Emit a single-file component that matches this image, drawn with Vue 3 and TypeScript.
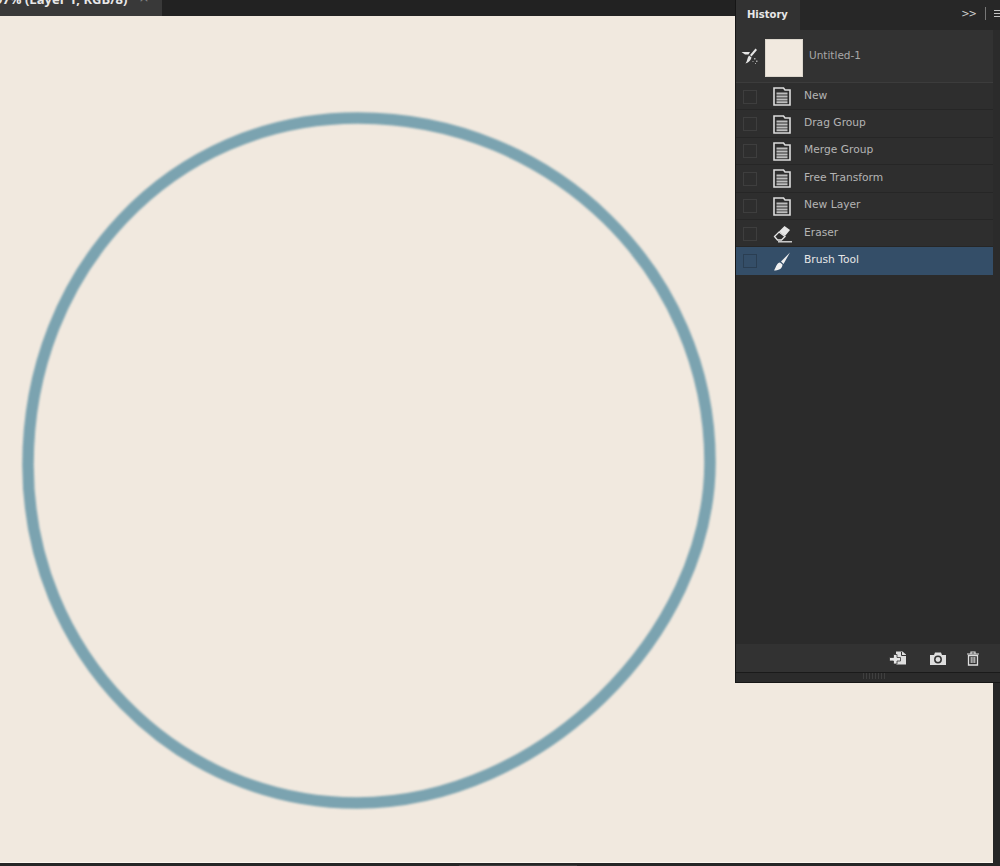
<script setup lang="ts">
type Step = { label: string; icon: 'doc' | 'eraser' | 'brush'; active?: boolean }
const steps: Step[] = [
  { label: 'New', icon: 'doc' },
  { label: 'Drag Group', icon: 'doc' },
  { label: 'Merge Group', icon: 'doc' },
  { label: 'Free Transform', icon: 'doc' },
  { label: 'New Layer', icon: 'doc' },
  { label: 'Eraser', icon: 'eraser' },
  { label: 'Brush Tool', icon: 'brush', active: true },
]
</script>

<template>
  <div class="app">
    <header class="topbar">
      <div class="doc-tab">
        <span class="doc-title">97% (Layer 1, RGB/8)</span>
        <span class="doc-close">×</span>
      </div>
    </header>
    <main class="canvas">
      <svg class="ring" width="993" height="846" viewBox="0 16 993 846">
        <path
          d="M358 118 C552 118 710 272 710 462 C710 635 540 803 357 803 C175 803 28 652 28 465 C28 270 172 118 358 118 Z"
          fill="none"
          stroke="#7ba3b0"
          stroke-width="11.500"
        />
      </svg>
    </main>
    <div class="statusbar"><span class="status-thumb"></span></div>

    <aside class="panel">
      <div class="panel-head">
        <div class="panel-tab">History</div>
        <div class="panel-tools">
          <span class="chev">&gt;&gt;</span>
          <span class="sep"></span>
          <span class="burger"><i></i><i></i><i></i></span>
        </div>
      </div>
      <div class="snapshot">
        <svg class="snap-icon" width="18" height="18" viewBox="0 0 18 18">
          <path d="M0.500 5 H9 L7.500 7.500 H4 Z" fill="#e6e6e6" />
          <path d="M14.500 1.500 L16 3 L10.500 9.500 L9 8 Z" fill="#e6e6e6" />
          <path d="M8 8.500 L10.500 10.500 C10 13 8 15.500 4.500 16.500 C6.500 14 6 11 8 8.500 Z" fill="#e6e6e6" />
          <path d="M13 11h1.500v1.500H13zM11.500 14h1v1h-1zM15 13.500h1.500v1.500H15zM14 16h1v1h-1z" fill="#a8a8a8" />
        </svg>
        <div class="thumb"></div>
        <span class="snap-label">Untitled-1</span>
      </div>
      <ul class="steps">
        <li v-for="s in steps" :key="s.label" class="step" :class="{ active: s.active }">
          <span class="check"></span>
          <span class="step-icon">
            <svg v-if="s.icon === 'doc'" width="18" height="19" viewBox="0 0 18 19">
              <path d="M1 1h9.500l1.500 2h5v15H1z" fill="none" stroke="#dcdcdc" stroke-width="1.600" />
              <path d="M3.500 6.500h11M3.500 9.500h11M3.500 12.500h11M3.500 15.300h11" stroke="#bdbdbd" stroke-width="1.900" />
            </svg>
            <svg v-else-if="s.icon === 'eraser'" width="20" height="18" viewBox="0 0 20 18">
              <path d="M1.500 11.500 L6 7 L12 11.500 L8.500 15 H4.500 Z" fill="none" stroke="#e6e6e6" stroke-width="1.300" />
              <path d="M6 6.500 L11.500 1 L17 5 L12 11 Z" fill="#e6e6e6" />
              <path d="M5 16.800 H19" stroke="#e6e6e6" stroke-width="1.300" />
            </svg>
            <svg v-else width="18" height="19" viewBox="0 0 18 19">
              <path d="M17 0.500 L8 9.500 L10.500 12 Z" fill="#f0f0f0" />
              <path d="M7 10.500 C4 11 3.500 14 1 18.500 C5 18.500 9.500 17 9.500 12.500 Z" fill="#f0f0f0" />
            </svg>
          </span>
          <span class="step-label">{{ s.label }}</span>
        </li>
      </ul>
      <div class="spacer"></div>
      <div class="panel-foot">
        <svg class="foot-new" width="18" height="15" viewBox="0 0 18 15">
          <path d="M7 0.500h6.500l3.500 3v10H7z" fill="#dedede" />
          <path d="M12.500 1v3.500h4.500" fill="none" stroke="#333" stroke-width="1" />
          <path d="M0.500 6.500h4v-3h3.500v3h3.500V10H8v3H4.500v-3h-4z" fill="#e6e6e6" stroke="#333" stroke-width="0.800" />
        </svg>
        <svg width="16" height="13" viewBox="0 0 16 13">
          <path d="M0 3h4l1-2.500h6L12 3h4v10H0z" fill="#dedede" />
          <circle cx="8" cy="7.500" r="3.200" fill="none" stroke="#333" stroke-width="1.500" />
        </svg>
        <svg width="14" height="15" viewBox="0 0 14 15">
          <path d="M1 3h12M5 3V1h4v2" fill="none" stroke="#dedede" stroke-width="1.200" />
          <path d="M2.500 4.500h9V14h-9z" fill="none" stroke="#dedede" stroke-width="1.300" />
          <path d="M5.200 6v6M7 6v6M8.800 6v6" stroke="#dedede" stroke-width="1" />
        </svg>
      </div>
      <div class="panel-grip"><span></span></div>
    </aside>
  </div>
</template>

<style>
html, body { margin: 0; background: #262626; }
</style>

<style scoped>
.app {
  position: relative;
  width: 1000px;
  height: 866px;
  overflow: hidden;
  background: #262626;
  font-family: "DejaVu Sans", sans-serif;
}
.topbar {
  height: 16px;
  display: flex;
  background: #222;
}
.doc-tab {
  width: 162px;
  height: 16px;
  background: #393939;
  overflow: hidden;
  display: flex;
  align-items: flex-end;
  gap: 11px;
  flex: none;
}
.doc-title {
  font: bold 13px/20px "Open Sans", sans-serif;
  color: #e8e8e8;
  margin-left: -5px;
  margin-bottom: 7px;
  white-space: nowrap;
}
.doc-close {
  font: 13px/20px "DejaVu Sans", sans-serif;
  color: #8a8a8a;
  margin-bottom: 8px;
}
.canvas {
  width: 993px;
  height: 846px;
  background: #f1e9df;
  border-bottom: 1px solid #fbf6ef;
}
.ring {
  display: block;
  filter: blur(1px);
}
.statusbar {
  height: 3px;
  display: flex;
  align-items: flex-end;
}
.status-thumb {
  width: 118px;
  height: 1px;
  margin-left: 459px;
  background: #3c3c3c;
}
.panel {
  position: absolute;
  left: 735px;
  top: 0;
  width: 265px;
  height: 683px;
  box-sizing: border-box;
  background: #2b2b2b;
  border-left: 1px solid #161616;
  border-bottom: 1px solid #161616;
  display: flex;
  flex-direction: column;
}
.panel-head {
  height: 30px;
  flex: none;
  display: flex;
  justify-content: space-between;
  background: #272727;
}
.panel-tab {
  width: 64px;
  background: #323232;
  color: #e8e8e8;
  font: bold 10px/29px "DejaVu Sans", sans-serif;
  padding-left: 11px;
  box-sizing: border-box;
}
.panel-tools {
  display: flex;
  align-items: center;
  padding-bottom: 3px;
}
.chev {
  color: #cfcfcf;
  font: 10px/12px "DejaVu Sans", sans-serif;
  letter-spacing: -1px;
  margin-right: 9px;
}
.sep {
  width: 1px;
  height: 13px;
  background: #777;
  margin-right: 8px;
}
.burger {
  width: 6px;
  display: flex;
  flex-direction: column;
  gap: 2px;
}
.burger i {
  display: block;
  height: 1px;
  background: #c4c4c4;
}
.snapshot {
  height: 53px;
  width: 257px;
  flex: none;
  display: flex;
  align-items: center;
  background: #323232;
  border-bottom: 1px solid #3c3c3c;
  box-sizing: border-box;
  padding-left: 5px;
  padding-top: 4px;
}
.snap-icon {
  flex: none;
  margin-top: -4px;
}
.thumb {
  width: 38px;
  height: 38px;
  box-sizing: border-box;
  background: #f1e9df;
  border: 1px solid #dcd6cc;
  margin-left: 6px;
  flex: none;
}
.snap-label {
  margin-left: 6px;
  margin-bottom: 6px;
  color: #a8a8a8;
  font-size: 10.500px;
}
.steps {
  list-style: none;
  margin: 0;
  padding: 0;
}
.step {
  height: 27.400px;
  width: 257px;
  display: flex;
  align-items: center;
  box-sizing: border-box;
  background: #2e2e2e;
  border-bottom: 1px solid #262626;
  padding-left: 7px;
  color: #b4b4b4;
  font-size: 10.700px;
}
.step.active {
  background: #344e68;
  border-bottom-color: #344e68;
  color: #e6e6e6;
}
.check {
  width: 14px;
  height: 14px;
  box-sizing: border-box;
  border: 1px solid #3e3e3e;
  margin-top: 1px;
  flex: none;
}
.active .check {
  border-color: #2a3e52;
}
.step-icon {
  width: 24px;
  margin-left: 16px;
  margin-top: 1px;
  flex: none;
  display: flex;
}
.step-label {
  margin-left: 7px;
  margin-bottom: 2px;
  white-space: nowrap;
}
.spacer {
  flex: 1;
}
.panel-foot {
  height: 29px;
  flex: none;
  display: flex;
  align-items: center;
  justify-content: flex-end;
  gap: 20px;
  padding-right: 20px;
  background: #323232;
  border-bottom: 1px solid #1a1a1a;
  box-sizing: border-box;
}
.foot-new {
  margin-right: 3px;
}
.panel-grip {
  height: 9px;
  flex: none;
  display: flex;
  justify-content: center;
  background: #2b2b2b;
}
.panel-grip span {
  width: 22px;
  height: 6px;
  margin-left: 12px;
  background: repeating-linear-gradient(90deg, #3f3f3f 0 1px, #2b2b2b 1px 3px);
}
</style>
